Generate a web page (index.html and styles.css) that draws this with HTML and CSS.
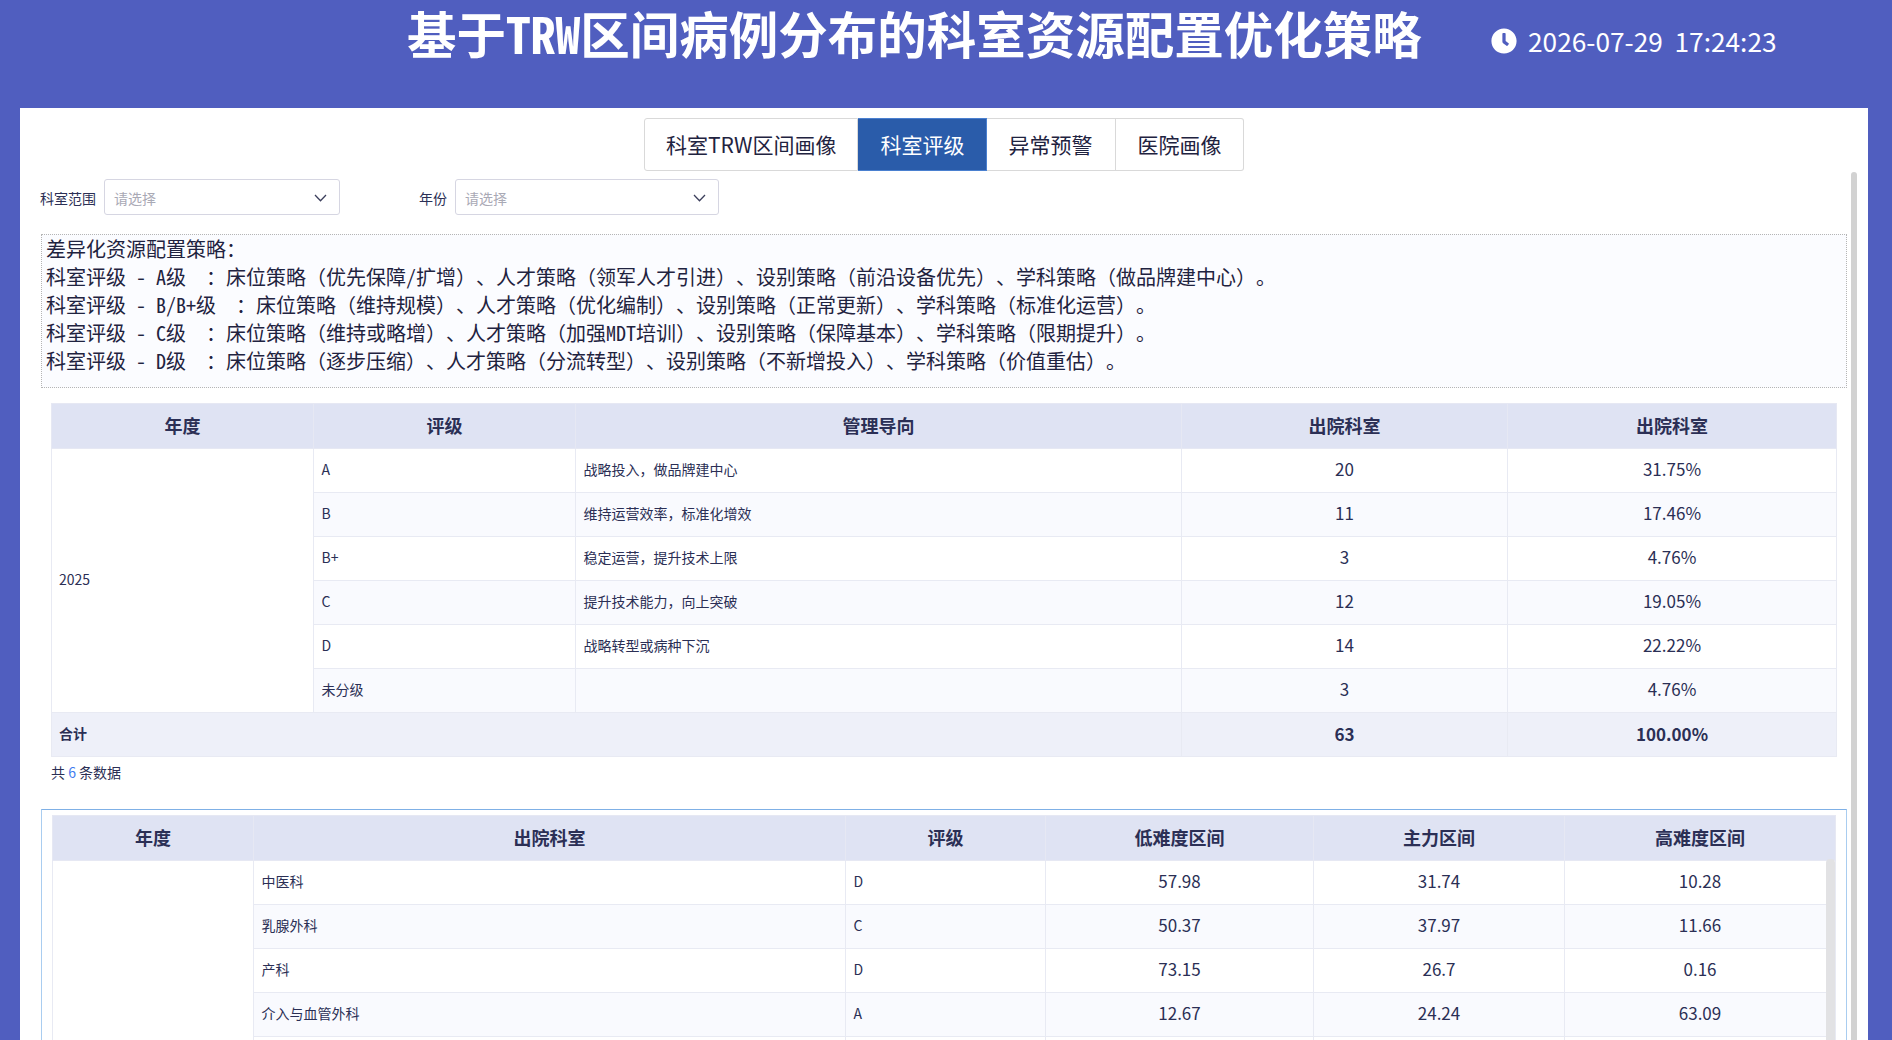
FILE: index.html
```html
<!DOCTYPE html>
<html lang="zh-CN">
<head>
<meta charset="utf-8">
<title>基于TRW区间病例分布的科室资源配置优化策略</title>
<link rel="stylesheet" href="styles.css">
</head>
<body>
<header class="top">
  <h1 class="title">基于TRW区间病例分布的科室资源配置优化策略</h1>
  <div class="clock">
    <svg class="clock-icon" viewBox="0 0 512 512"><path fill="#fff" d="M256 8C119 8 8 119 8 256s111 248 248 248 248-111 248-248S393 8 256 8zm92.49 313l-20 25a16 16 0 0 1-22.49 2.5l-67-49.72a40 40 0 0 1-15-31.23V112a16 16 0 0 1 16-16h32a16 16 0 0 1 16 16v144l58 42.5a16 16 0 0 1 2.49 22.5z"/></svg>
    <span class="clock-text">2026-07-29&nbsp;&nbsp;17:24:23</span>
  </div>
</header>
<main class="panel">
  <nav class="tabs">
    <a class="tab tab-first">科室TRW区间画像</a>
    <a class="tab tab-active">科室评级</a>
    <a class="tab">异常预警</a>
    <a class="tab tab-last">医院画像</a>
  </nav>
  <div class="scroll">
    <div class="scrollbar"></div>
    <form class="filters">
      <label class="flabel">科室范围</label>
      <div class="select select-a"><span>请选择</span><svg class="chev" viewBox="0 0 13 8"><path d="M1 1l5.5 5.7L12 1" fill="none" stroke="#3c3f5c" stroke-width="1.3"/></svg></div>
      <label class="flabel flabel-b">年份</label>
      <div class="select select-b"><span>请选择</span><svg class="chev" viewBox="0 0 13 8"><path d="M1 1l5.5 5.7L12 1" fill="none" stroke="#3c3f5c" stroke-width="1.3"/></svg></div>
    </form>
    <pre class="note">差异化资源配置策略：
科室评级 - A级  ：床位策略（优先保障/扩增）、人才策略（领军人才引进）、设别策略（前沿设备优先）、学科策略（做品牌建中心）。
科室评级 - B/B+级  ：床位策略（维持规模）、人才策略（优化编制）、设别策略（正常更新）、学科策略（标准化运营）。
科室评级 - C级  ：床位策略（维持或略增）、人才策略（加强MDT培训）、设别策略（保障基本）、学科策略（限期提升）。
科室评级 - D级  ：床位策略（逐步压缩）、人才策略（分流转型）、设别策略（不新增投入）、学科策略（价值重估）。</pre>
    <section class="sec1">
      <table class="grid g1">
        <colgroup><col class="c1a"><col class="c1b"><col class="c1c"><col class="c1d"><col class="c1e"></colgroup>
        <thead><tr><th>年度</th><th>评级</th><th>管理导向</th><th>出院科室</th><th>出院科室</th></tr></thead>
        <tbody>
          <tr><td rowspan="6" class="plain">2025</td><td>A</td><td>战略投入，做品牌建中心</td><td class="num">20</td><td class="num">31.75%</td></tr>
          <tr class="alt"><td>B</td><td>维持运营效率，标准化增效</td><td class="num">11</td><td class="num">17.46%</td></tr>
          <tr><td>B+</td><td>稳定运营，提升技术上限</td><td class="num">3</td><td class="num">4.76%</td></tr>
          <tr class="alt"><td>C</td><td>提升技术能力，向上突破</td><td class="num">12</td><td class="num">19.05%</td></tr>
          <tr><td>D</td><td>战略转型或病种下沉</td><td class="num">14</td><td class="num">22.22%</td></tr>
          <tr class="alt"><td>未分级</td><td></td><td class="num">3</td><td class="num">4.76%</td></tr>
        </tbody>
        <tfoot><tr><td colspan="3" class="sum">合计</td><td class="num sum">63</td><td class="num sum">100.00%</td></tr></tfoot>
      </table>
      <p class="count">共 <b>6</b> 条数据</p>
    </section>
    <section class="sec2">
      <table class="grid g2">
        <colgroup><col class="c2a"><col class="c2b"><col class="c2c"><col class="c2d"><col class="c2e"><col class="c2f"></colgroup>
        <thead><tr><th>年度</th><th>出院科室</th><th>评级</th><th>低难度区间</th><th>主力区间</th><th>高难度区间</th></tr></thead>
        <tbody>
          <tr><td rowspan="5" class="plain"></td><td>中医科</td><td>D</td><td class="num">57.98</td><td class="num">31.74</td><td class="num">10.28</td></tr>
          <tr class="alt"><td>乳腺外科</td><td>C</td><td class="num">50.37</td><td class="num">37.97</td><td class="num">11.66</td></tr>
          <tr><td>产科</td><td>D</td><td class="num">73.15</td><td class="num">26.7</td><td class="num">0.16</td></tr>
          <tr class="alt"><td>介入与血管外科</td><td>A</td><td class="num">12.67</td><td class="num">24.24</td><td class="num">63.09</td></tr>
          <tr><td></td><td></td><td></td><td></td><td></td></tr>
        </tbody>
      </table>
      <div class="innerbar"></div>
    </section>
  </div>
</main>
</body>
</html>
```
FILE: styles.css
```css
* { box-sizing: border-box; }
html, body { margin: 0; height: 100%; overflow: hidden; }
body {
  width: 1892px; height: 1040px;
  background: #505ebf;
  font-family: "Noto Sans CJK SC", "Noto Sans", sans-serif;
  color: #2b2f55;
  display: flex; flex-direction: column;
  text-spacing-trim: space-all;
}
.top {
  height: 108px; flex: none;
  display: flex; align-items: flex-start; color: #fff;
  padding-left: 407px;
}
.title {
  margin: 0; width: 1084px; font-size: 49.5px; line-height: 66px; font-weight: 700; white-space: nowrap;
  font-family: "Noto Sans Mono CJK SC", "Noto Sans CJK SC", monospace;
}
.clock { display: flex; align-items: center; height: 82px; }
.clock-icon { width: 26px; height: 26px; margin-right: 11px; }
.clock-text { font-size: 26.25px; white-space: nowrap; }
.panel {
  flex: 1; margin: 0 24px 0 20px; background: #fff; min-height: 0;
  display: flex; flex-direction: column; overflow: hidden;
}
.tabs { display: flex; justify-content: flex-start; margin: 10px 0 0 624px; height: 53px; flex: none; }
.tab {
  height: 53px; padding: 0 22px; font-size: 21px; line-height: 51px; color: #1f2340;
  border: 1px solid #d9d9d9; border-left-width: 0; background: #fff;
}
.tab-first { border-left-width: 1px; border-radius: 3px 0 0 3px; padding: 0 20px 0 21px; }
.tab-last { border-radius: 0 3px 3px 0; padding: 0 21px 0 22px; }
.tab-active { background: #2a5caa; color: #fff; border-color: #4a80d0; padding: 0 21px 0 23px; }
.scroll { position: relative; flex: 1; padding: 8px 0 0 21px; min-height: 0; overflow: hidden; }
.scrollbar {
  position: absolute; left: 1831px; top: 1px; bottom: 0; width: 6px;
  background: #d2d2d2; border-radius: 3px 3px 0 0;
}
.filters { display: flex; align-items: center; height: 36px; margin-left: -1px; }
.flabel { font-size: 14px; width: 56px; white-space: nowrap; color: #2b2f55; padding-top: 1px; }
.flabel-b { width: 28px; margin-left: 79px; }
.select {
  height: 36px; margin-left: 8px; border: 1px solid #d6d6e2; border-radius: 3px;
  display: flex; align-items: center; justify-content: space-between;
  padding: 2px 12px 0 9px; font-size: 14px; color: #a9a9b5;
}
.select-a { width: 236px; }
.select-b { width: 264px; }
.chev { width: 13px; height: 8px; }
.note {
  margin: 19px 0 0 0; width: 1806px; height: 154px;
  border: 1px dotted #b5b5b5; background: #fbfcff;
  padding: 0 4px; font-family: "Noto Sans Mono CJK SC", "Noto Sans CJK SC", monospace;
  font-size: 20px; line-height: 28px; color: #1f2340; white-space: pre;
}
.sec1 { margin: 15px 0 0 10px; width: 1785px; }
.grid { border-collapse: collapse; table-layout: fixed; width: 100%; }
.grid th {
  height: 45px; background: #dfe3f3; font-size: 18px; font-weight: 700; color: #2b2f55;
  border: 1px solid #e6e8f3; padding: 0 0 2px;
}
.grid td {
  height: 44px; font-size: 14px; padding: 0 7.5px 4px; border: 1px solid #e8eaf3; background: #fff; color: #2b2f55;
}
.grid tr.alt td { background: #f9fafe; }
.grid td.plain { background: #fff; padding-left: 7px; }
.grid td.num { font-size: 17px; text-align: center; padding: 0 0 4px; }
.grid td.sum { background: #eef0f9; font-weight: 700; padding-left: 7px; }
.grid td.num.sum { padding: 0 0 3px; }
.c1a { width: 262px; } .c1b { width: 262px; } .c1c { width: 606px; } .c1d { width: 326px; } .c1e { width: 329px; }
.count { margin: 5px 0 0; font-size: 14px; line-height: 20px; }
.count b { font-weight: 400; color: #3f7cf0; }
.sec2 {
  position: relative; margin: 27px 0 0 0; width: 1806px; height: 300px;
  border: 1px solid #a9cdf0; border-top-color: #7fb0e6; padding: 5px 11px 0 10px;
}
.c2a { width: 201px; } .c2b { width: 592px; } .c2c { width: 200px; } .c2d { width: 268px; } .c2e { width: 251px; } .c2f { width: 271px; }
.innerbar { position: absolute; right: 11px; top: 49px; bottom: 0; width: 9px; background: #e2e2e4; border-radius: 4px 4px 0 0; }
```
